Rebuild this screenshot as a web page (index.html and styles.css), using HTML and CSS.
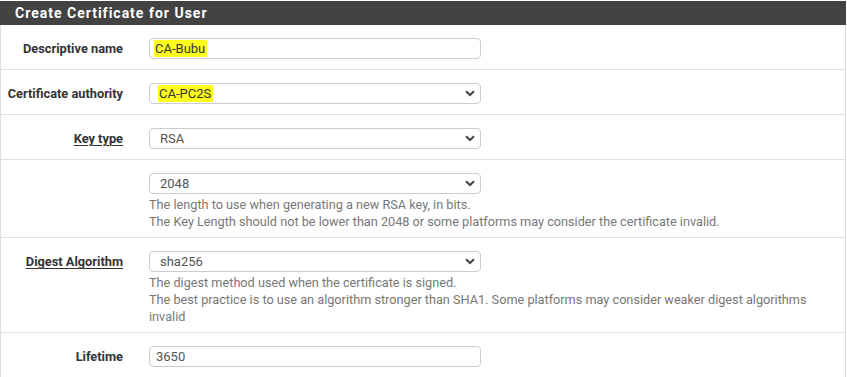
FILE: index.html
```html
<!DOCTYPE html>
<html lang="en">
<head>
    <meta charset="UTF-8">
    <title>Create Certificate for User</title>
    <link rel="stylesheet" href="styles.css">
</head>
<body>
    <div class="panel">
        <h2 class="panel-title">Create Certificate for User</h2>
        <div class="panel-body">
            <div class="row">
                <div class="label">Descriptive name</div>
                <div class="control">
                    <div class="field input"><span class="hl">CA-Bubu</span></div>
                </div>
            </div>
            <div class="row">
                <div class="label">Certificate authority</div>
                <div class="control">
                    <div class="field select"><span class="hl">CA-PC2S</span>
                        <svg class="caret" width="10" height="7" viewBox="0 0 10 7"><path d="M1 1.2 L5 5 L9 1.2" fill="none" stroke="#444" stroke-width="2"/></svg>
                    </div>
                </div>
            </div>
            <div class="row">
                <div class="label"><u>Key type</u></div>
                <div class="control">
                    <div class="field select">RSA
                        <svg class="caret" width="10" height="7" viewBox="0 0 10 7"><path d="M1 1.2 L5 5 L9 1.2" fill="none" stroke="#444" stroke-width="2"/></svg>
                    </div>
                </div>
            </div>
            <div class="row">
                <div class="label"></div>
                <div class="control">
                    <div class="field select">2048
                        <svg class="caret" width="10" height="7" viewBox="0 0 10 7"><path d="M1 1.2 L5 5 L9 1.2" fill="none" stroke="#444" stroke-width="2"/></svg>
                    </div>
                    <div class="help">The length to use when generating a new RSA key, in bits.<br>The Key Length should not be lower than 2048 or some platforms may consider the certificate invalid.</div>
                </div>
            </div>
            <div class="row">
                <div class="label"><u>Digest Algorithm</u></div>
                <div class="control">
                    <div class="field select">sha256
                        <svg class="caret" width="10" height="7" viewBox="0 0 10 7"><path d="M1 1.2 L5 5 L9 1.2" fill="none" stroke="#444" stroke-width="2"/></svg>
                    </div>
                    <div class="help">The digest method used when the certificate is signed.<br>The best practice is to use an algorithm stronger than SHA1. Some platforms may consider weaker digest algorithms invalid</div>
                </div>
            </div>
            <div class="row last">
                <div class="label">Lifetime</div>
                <div class="control">
                    <div class="field input">3650</div>
                </div>
            </div>
        </div>
    </div>
</body>
</html>
```

FILE: styles.css
```css
body {
    margin: 0;
    padding-top: 1px;
    font-family: Roboto, "Liberation Sans", sans-serif;
    font-size: 12.8px;
    color: #333;
    background: #fff;
}

.panel {
    width: 846px;
}

.panel-title {
    margin: 0;
    height: 24px;
    line-height: 24px;
    padding-left: 15px;
    background-color: #424242;
    color: #fff;
    font-size: 14px;
    font-weight: bold;
    letter-spacing: 1px;
}

.panel-body {
    border-left: 1px solid #ddd;
    border-right: 1px solid #ddd;
    border-bottom: 1px solid #ddd;
}

.row {
    display: grid;
    grid-template-columns: 122px 1fr;
    column-gap: 26px;
    padding: 13px 0 10px;
    border-bottom: 1px solid #e0e0e0;
}

.row.last {
    border-bottom: none;
}

.label {
    text-align: right;
    font-weight: bold;
    padding-top: 2px;
    line-height: 17px;
    white-space: nowrap;
}

.label u {
    text-decoration-thickness: 1px;
    text-underline-offset: 2px;
}

.control {
    width: 332px;
}

.field {
    position: relative;
    box-sizing: border-box;
    height: 21px;
    line-height: 19px;
    border: 1px solid #ccc;
    border-radius: 4px;
    color: #555;
    font-size: 13px;
}

.field.input {
    padding-left: 6px;
}

.field.select {
    padding-left: 10px;
}

.hl {
    background-color: #ffff1a;
    color: #333;
    padding: 1px 2px 1px 1px;
    margin-left: -2px;
}

.caret {
    position: absolute;
    right: 5px;
    top: 6px;
}

.help {
    margin-top: 2px;
    margin-bottom: -3px;
    width: 660px;
    line-height: 17px;
    font-size: 12.7px;
    color: #777;
}
```
